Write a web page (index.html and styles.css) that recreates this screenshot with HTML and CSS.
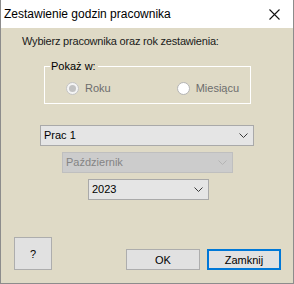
FILE: index.html
```html
<!DOCTYPE html>
<html lang="pl">
<head>
  <meta charset="UTF-8">
  <title>Zestawienie godzin pracownika</title>
  <link rel="stylesheet" href="styles.css">
</head>
<body>

<div id="dialog">
  <div id="title-bar">
    <span id="title-text">Zestawienie godzin pracownika</span>
    <span id="close-button">
      <svg width="11" height="11" viewBox="0 0 11 11">
        <path d="M0.5 0.5 L10.5 10.5 M10.5 0.5 L0.5 10.5" stroke="#111" stroke-width="1.1" fill="none"/>
      </svg>
    </span>
  </div>

  <div id="content">
    <div id="prompt">Wybierz pracownika oraz rok zestawienia:</div>

    <fieldset id="period-group">
      <legend>Pokaż w:</legend>
      <div class="radio-row">
        <label class="radio-option roku">
          <span class="radio-dot checked"></span>
          <span class="radio-label">Roku</span>
        </label>
        <label class="radio-option miesiac">
          <span class="radio-dot"></span>
          <span class="radio-label">Miesiącu</span>
        </label>
      </div>
    </fieldset>

    <div class="combo combo-worker">
      <span class="combo-text">Prac 1</span>
      <svg class="chevron" width="9" height="5" viewBox="0 0 9 5"><path d="M0.5 0.5 L4.5 4.5 L8.5 0.5" stroke="#3a3a3a" fill="none"/></svg>
    </div>
    <div class="combo combo-month disabled">
      <span class="combo-text">Październik</span>
      <svg class="chevron" width="9" height="5" viewBox="0 0 9 5"><path d="M0.5 0.5 L4.5 4.5 L8.5 0.5" stroke="#b4b4b4" fill="none"/></svg>
    </div>
    <div class="combo combo-year">
      <span class="combo-text">2023</span>
      <svg class="chevron" width="9" height="5" viewBox="0 0 9 5"><path d="M0.5 0.5 L4.5 4.5 L8.5 0.5" stroke="#3a3a3a" fill="none"/></svg>
    </div>

    <div id="footer">
      <button class="dlg-button help-button">?</button>
      <div class="footer-right">
        <button class="dlg-button">OK</button>
        <button class="dlg-button default">Zamknij</button>
      </div>
    </div>
  </div>
</div>

</body>
</html>
```

FILE: styles.css
```css
body {
    margin: 0;
    padding: 0;
    background: #dfdac6;
    font-family: 'Liberation Sans', Arial, sans-serif;
    font-size: 11px;
    color: #000;
}

#dialog {
    width: 294px;
    height: 284px;
    box-sizing: border-box;
    border-left: 1px solid #8c8c8c;
    border-right: 1px solid #8c8c8c;
    border-bottom: 1px solid #8c8c8c;
    display: flex;
    flex-direction: column;
    background: #dfdac6;
}

#title-bar {
    height: 28px;
    flex-shrink: 0;
    background: #fff;
    display: flex;
    align-items: center;
    justify-content: space-between;
    padding-left: 3px;
}

#title-text {
    font-family: 'Liberation Sans', Arial, sans-serif;
    font-size: 12px;
    color: #000;
    margin-top: -1px;
}

#close-button {
    width: 46px;
    height: 28px;
    display: flex;
    align-items: center;
    justify-content: center;
    margin-right: -8px;
}

#close-button svg {
    display: block;
    margin-right: 7px;
}

#content {
    flex: 1;
    display: flex;
    flex-direction: column;
    padding-top: 7px;
}

#prompt {
    margin-left: 21px;
    line-height: 13px;
    color: #1a1a1a;
    letter-spacing: -0.2px;
}

#period-group {
    margin: 12px 0 0 43px;
    padding: 0;
    width: 207px;
    height: 44px;
    box-sizing: border-box;
    border: 1px solid #fff;
}

#period-group legend {
    margin-left: 5px;
    padding: 0 2px 0 1px;
    line-height: 13px;
    font-size: 11px;
}

.radio-row {
    display: flex;
    align-items: center;
    height: 28px;
    padding-top: 2px;
    box-sizing: border-box;
}

.radio-option {
    display: flex;
    align-items: center;
}

.radio-option.roku {
    margin-left: 21px;
}

.radio-option.miesiac {
    margin-left: 66px;
}

.radio-dot {
    width: 13px;
    height: 13px;
    box-sizing: border-box;
    border-radius: 50%;
    border: 1px solid #b5b5b5;
    background: #fff;
    display: flex;
    align-items: center;
    justify-content: center;
    margin-right: 6px;
}

.radio-dot.checked {
    border-color: #c4c4c4;
    background: #f4f4f4;
}

.radio-dot.checked::after {
    content: "";
    width: 7px;
    height: 7px;
    border-radius: 50%;
    background: #c2c2c2;
}

.radio-label {
    color: #6d6d6d;
    font-size: 11px;
}

.combo {
    height: 21px;
    box-sizing: border-box;
    border: 1px solid #a9a9a9;
    background: #e5e5e5;
    display: flex;
    align-items: center;
    justify-content: space-between;
    padding: 0 5px 0 3px;
}

.combo-text {
    line-height: 13px;
}

.chevron {
    display: block;
}

.combo-worker {
    width: 214px;
    margin: 21px 0 0 39px;
}

.combo-month {
    width: 171px;
    margin: 6px 0 0 61px;
}

.combo.disabled {
    background: #cccccc;
    border-color: #bfbfbf;
}

.combo.disabled .combo-text {
    color: #848484;
}

.combo-year {
    width: 121px;
    margin: 6px 0 0 87px;
}

#footer {
    margin-top: auto;
    margin-bottom: 13px;
    display: flex;
    align-items: flex-end;
    justify-content: space-between;
    padding: 0 12px 0 13px;
}

.footer-right {
    display: flex;
    gap: 7px;
}

.dlg-button {
    font-family: 'Liberation Sans', Arial, sans-serif;
    font-size: 11px;
    color: #000;
    width: 74px;
    height: 21px;
    padding: 0;
    box-sizing: border-box;
    border: 1px solid #adadad;
    background: #e1e1e1;
}

.dlg-button.help-button {
    width: 38px;
    height: 33px;
}

.dlg-button.default {
    border: 2px solid #0078d7;
}
```
